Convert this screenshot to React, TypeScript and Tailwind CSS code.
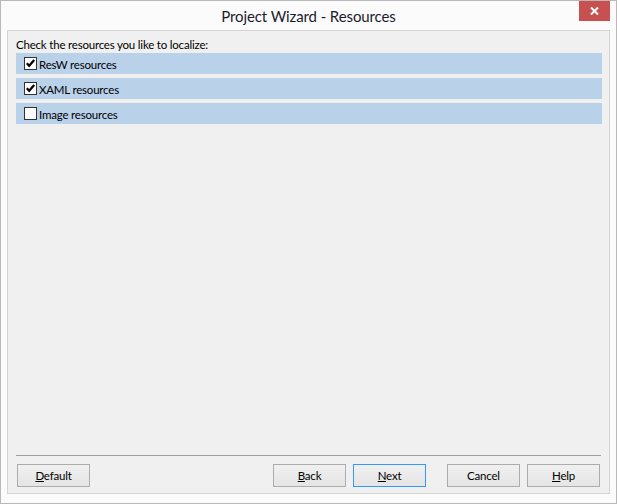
import React from "react";

const font = { fontFamily: 'Lato, "Liberation Sans", Arial, sans-serif' };

function Check({ checked }: { checked: boolean }) {
  return (
    <div className="w-[13px] h-[13px] border border-[#333333] bg-white flex items-center justify-center shrink-0">
      {checked && (
        <svg width="11" height="11" viewBox="0 0 11 11">
          <path d="M1.8 5.2 L4.2 7.8 L9.2 2" fill="none" stroke="#000" strokeWidth="2.2" />
        </svg>
      )}
    </div>
  );
}

function Row({ label, checked }: { label: string; checked: boolean }) {
  return (
    <div className="h-[21px] bg-[#bad1ea] flex items-center pl-[8px]">
      <Check checked={checked} />
      <span className="ml-[2px] text-[11.5px] tracking-[-0.2px] text-black leading-[15px] pt-[1px]">{label}</span>
    </div>
  );
}

function Btn({ children, focused }: { children: React.ReactNode; focused?: boolean }) {
  return (
    <div
      className={
        "w-[73px] h-[23px] flex items-center justify-center text-[11.5px] tracking-[-0.2px] text-black bg-gradient-to-b from-[#f0f0f0] to-[#e5e5e5] border " +
        (focused ? "border-[#3399ff]" : "border-[#acacac]")
      }
    >
      {children}
    </div>
  );
}

export default function App() {
  return (
    <div style={font} className="w-[617px] h-[504px] border border-[#b9b9b9] bg-[#fbfbfb] flex flex-col">
      <div className="h-[29px] relative flex items-center justify-center shrink-0">
        <span className="text-[15px] tracking-[-0.1px] text-[#1b1b2b] pt-[1px]">Project Wizard - Resources</span>
        <div className="absolute right-[6px] top-0 w-[31px] h-[20px] bg-[#c75050] flex items-center justify-center">
          <svg width="9" height="8" viewBox="0 0 9 8">
            <path d="M1 0.5 L8 7.5 M8 0.5 L1 7.5" stroke="#fff" strokeWidth="2" fill="none" />
          </svg>
        </div>
      </div>
      <div className="mx-[6px] mb-[9px] flex-1 border border-[#d4d4d4] bg-[#f0f0f0] flex flex-col">
        <div className="pt-[6px] pl-[8px] text-[11.5px] tracking-[-0.2px] leading-[15px] text-black">
          Check the resources you like to localize:
        </div>
        <div className="mt-[1px] ml-[8px] mr-[7px] flex flex-col gap-[4px]">
          <Row label="ResW resources" checked={true} />
          <Row label="XAML resources" checked={true} />
          <Row label="Image resources" checked={false} />
        </div>
        <div className="flex-1" />
        <div className="ml-[8px] mr-[8px] h-[1px] bg-[#a0a0a0]" />
        <div className="mt-[8px] mb-[6px] pl-[9px] pr-[9px] flex items-center">
          <Btn>
            <span><u>D</u>efault</span>
          </Btn>
          <div className="flex-1" />
          <Btn>
            <span><u>B</u>ack</span>
          </Btn>
          <div className="w-[7px]" />
          <Btn focused>
            <span><u>N</u>ext</span>
          </Btn>
          <div className="w-[21px]" />
          <Btn>
            <span>Cancel</span>
          </Btn>
          <div className="w-[7px]" />
          <Btn>
            <span><u>H</u>elp</span>
          </Btn>
        </div>
      </div>
    </div>
  );
}
